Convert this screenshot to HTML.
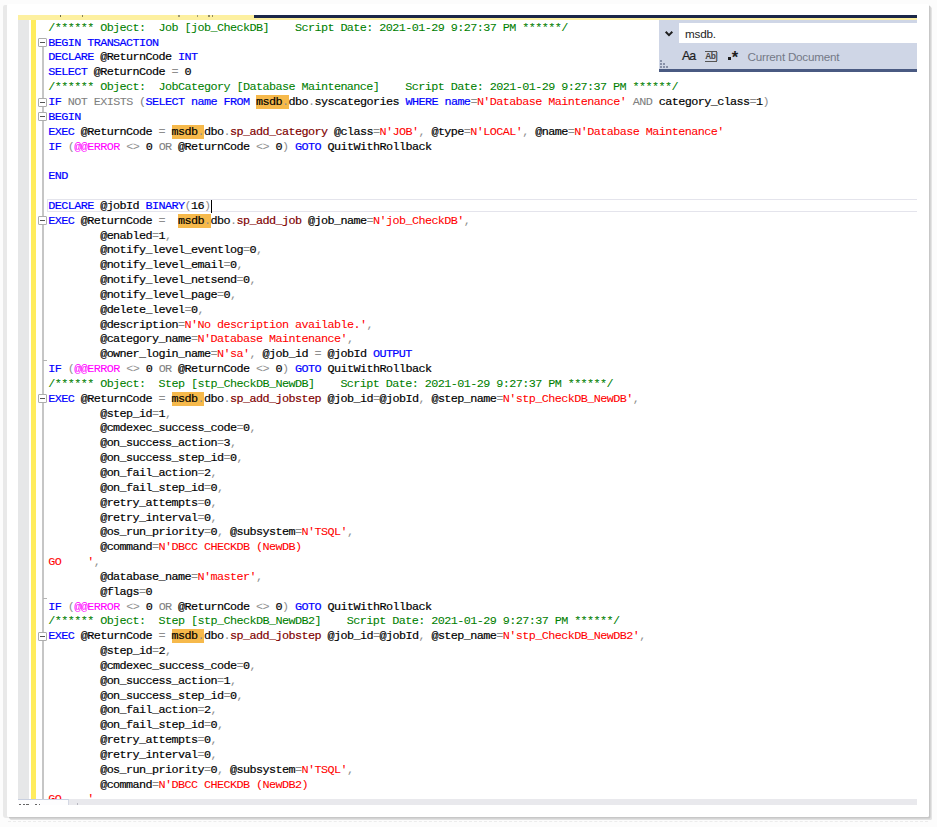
<!DOCTYPE html>
<html lang="en"><head><meta charset="utf-8"><title>SSMS job script</title>
<style>
html,body{margin:0;padding:0}
body{width:937px;height:827px;background:#fcfcfc;position:relative;overflow:hidden;font-family:"Liberation Sans",sans-serif}
#card{position:absolute;left:6.9px;top:3.5px;width:922.3px;height:813.5px;background:#fff;border-radius:1.5px;
 box-shadow:1.5px 1.4px 0 0 #c7c7c7, 2.9px 3.1px 0 0 #e1e1e1}
#lband{position:absolute;left:3px;top:5px;width:5px;height:813px;background:#e9e9e9;border-radius:2px 0 0 3px}
#dots{position:absolute;left:8px;top:821.2px;width:920px;height:0;border-top:0.9px dashed #ececec}
#ed{position:absolute;left:18px;top:15.2px;width:899px;height:789.8px;background:#fff;overflow:hidden}
.abs{position:absolute}
#code{position:absolute;left:0;top:0;font-family:"Liberation Mono",monospace;font-size:11.8px;letter-spacing:-0.5862px;color:#000;white-space:pre;-webkit-text-stroke:0.18px}
.ln{position:absolute;left:30.20px;height:14.84px;line-height:14.84px;white-space:pre}
.c{color:#008000}.k{color:#0000ff}.g{color:#808080}.s{color:#ff0000}.m{color:#800000}.f{color:#ff00ff}
.c,.s,.g,.f{-webkit-text-stroke:0.06px}
.p{color:#8e8e8e;-webkit-text-stroke:0}
.h{-webkit-text-stroke:0.18px;background:#f6b94b;padding:0}
.bx{position:absolute;left:19.9px;width:7.1px;height:7.1px;border:1px solid #adadad;border-radius:1px;background:#fff;box-sizing:content-box}
.bx i{position:absolute;left:1.5px;top:3.0px;width:4.2px;height:1.1px;background:#555}
.tk{position:absolute;left:24.6px;width:4px;height:1px;background:#b4b4b4}
</style></head>
<body>
<div id="lband"></div><div id="dots"></div>
<div id="card"></div>
<div id="ed">
<div class="abs" style="left:0;top:0;width:236px;height:4.4px;background:#fdf0a0"></div>
<div class="abs" style="left:236px;top:0;width:663px;height:2.8px;background:#1b2748"></div>
<div class="abs" style="left:236px;top:2.8px;width:663px;height:1.6px;background:#fdf0a0"></div>
<div class="abs" style="left:41.5px;top:0.2px;width:1.6px;height:1.2px;background:#4a4a30;opacity:.8"></div>
<div class="abs" style="left:63.7px;top:0.2px;width:1.6px;height:1.2px;background:#6a6a48;opacity:.8"></div>
<div class="abs" style="left:160.1px;top:0.2px;width:1.6px;height:1.2px;background:#8a8560;opacity:.8"></div>
<div class="abs" style="left:178.5px;top:0.2px;width:1.6px;height:1.2px;background:#8a8560;opacity:.8"></div>
<div class="abs" style="left:190.0px;top:0.2px;width:1.6px;height:1.2px;background:#77734f;opacity:.8"></div>
<div class="abs" style="left:193.9px;top:0.2px;width:1.6px;height:1.2px;background:#77734f;opacity:.8"></div>
<div class="abs" style="left:0;top:4.4px;width:10.8px;height:780px;background:#e6e7e8"></div>
<div class="abs" style="left:12.8px;top:4.4px;width:5px;height:780px;background:#ffec5c"></div>
<div class="abs" style="left:24.0px;top:30px;width:1.8px;height:755px;background:#c6c6c6"></div>
<div class="abs" style="left:28.5px;top:183.58px;width:871px;height:13.44px;border:1px solid #e4e4ec;box-sizing:border-box"></div>
<div id="code">
<div class="ln" style="top:5.60px"><span class="c">/****** Object:  Job [job_CheckDB]    Script Date: 2021-01-29 9:27:37 PM ******/</span></div>
<div class="ln" style="top:20.44px"><span class="k">BEGIN TRANSACTION</span></div>
<div class="ln" style="top:35.28px"><span class="k">DECLARE</span> @ReturnCode <span class="k">INT</span></div>
<div class="ln" style="top:50.12px"><span class="k">SELECT</span> @ReturnCode <span class="p">=</span> 0</div>
<div class="ln" style="top:64.96px"><span class="c">/****** Object:  JobCategory [Database Maintenance]    Script Date: 2021-01-29 9:27:37 PM ******/</span></div>
<div class="ln" style="top:79.80px"><span class="k">IF</span> <span class="g">NOT EXISTS (</span><span class="k">SELECT</span> <span class="k">name</span> <span class="k">FROM</span> <span class="h">msdb<span class="p">.</span></span>dbo<span class="p">.</span>syscategories <span class="k">WHERE</span> <span class="k">name</span><span class="p">=</span><span class="s">N'Database Maintenance'</span> <span class="g">AND</span> category_class<span class="p">=</span>1<span class="p">)</span></div>
<div class="ln" style="top:94.64px"><span class="k">BEGIN</span></div>
<div class="ln" style="top:109.48px"><span class="k">EXEC</span> @ReturnCode <span class="p">=</span> <span class="h">msdb<span class="p">.</span></span>dbo<span class="p">.</span><span class="m">sp_add_category</span> @class<span class="p">=</span><span class="s">N'JOB'</span><span class="p">,</span> @type<span class="p">=</span><span class="s">N'LOCAL'</span><span class="p">,</span> @name<span class="p">=</span><span class="s">N'Database Maintenance'</span></div>
<div class="ln" style="top:124.32px"><span class="k">IF</span> <span class="p">(</span><span class="f">@@ERROR</span> <span class="p">&lt;&gt;</span> 0 <span class="g">OR</span> @ReturnCode <span class="p">&lt;&gt;</span> 0<span class="p">)</span> <span class="k">GOTO</span> QuitWithRollback</div>
<div class="ln" style="top:139.16px"></div>
<div class="ln" style="top:154.00px"><span class="k">END</span></div>
<div class="ln" style="top:168.84px"></div>
<div class="ln" style="top:183.68px"><span class="k">DECLARE</span> @jobId <span class="k">BINARY</span><span class="p">(</span>16<span class="p">)</span></div>
<div class="ln" style="top:198.52px"><span class="k">EXEC</span> @ReturnCode <span class="p">=</span>  <span class="h">msdb<span class="p">.</span></span>dbo<span class="p">.</span><span class="m">sp_add_job</span> @job_name<span class="p">=</span><span class="s">N'job_CheckDB'</span><span class="p">,</span></div>
<div class="ln" style="top:213.36px">        @enabled<span class="p">=</span>1<span class="p">,</span></div>
<div class="ln" style="top:228.20px">        @notify_level_eventlog<span class="p">=</span>0<span class="p">,</span></div>
<div class="ln" style="top:243.04px">        @notify_level_email<span class="p">=</span>0<span class="p">,</span></div>
<div class="ln" style="top:257.88px">        @notify_level_netsend<span class="p">=</span>0<span class="p">,</span></div>
<div class="ln" style="top:272.72px">        @notify_level_page<span class="p">=</span>0<span class="p">,</span></div>
<div class="ln" style="top:287.56px">        @delete_level<span class="p">=</span>0<span class="p">,</span></div>
<div class="ln" style="top:302.40px">        @description<span class="p">=</span><span class="s">N'No description available.'</span><span class="p">,</span></div>
<div class="ln" style="top:317.24px">        @category_name<span class="p">=</span><span class="s">N'Database Maintenance'</span><span class="p">,</span></div>
<div class="ln" style="top:332.08px">        @owner_login_name<span class="p">=</span><span class="s">N'sa'</span><span class="p">,</span> @job_id <span class="p">=</span> @jobId <span class="k">OUTPUT</span></div>
<div class="ln" style="top:346.92px"><span class="k">IF</span> <span class="p">(</span><span class="f">@@ERROR</span> <span class="p">&lt;&gt;</span> 0 <span class="g">OR</span> @ReturnCode <span class="p">&lt;&gt;</span> 0<span class="p">)</span> <span class="k">GOTO</span> QuitWithRollback</div>
<div class="ln" style="top:361.76px"><span class="c">/****** Object:  Step [stp_CheckDB_NewDB]    Script Date: 2021-01-29 9:27:37 PM ******/</span></div>
<div class="ln" style="top:376.60px"><span class="k">EXEC</span> @ReturnCode <span class="p">=</span> <span class="h">msdb<span class="p">.</span></span>dbo<span class="p">.</span><span class="m">sp_add_jobstep</span> @job_id<span class="p">=</span>@jobId<span class="p">,</span> @step_name<span class="p">=</span><span class="s">N'stp_CheckDB_NewDB'</span><span class="p">,</span></div>
<div class="ln" style="top:391.44px">        @step_id<span class="p">=</span>1<span class="p">,</span></div>
<div class="ln" style="top:406.28px">        @cmdexec_success_code<span class="p">=</span>0<span class="p">,</span></div>
<div class="ln" style="top:421.12px">        @on_success_action<span class="p">=</span>3<span class="p">,</span></div>
<div class="ln" style="top:435.96px">        @on_success_step_id<span class="p">=</span>0<span class="p">,</span></div>
<div class="ln" style="top:450.80px">        @on_fail_action<span class="p">=</span>2<span class="p">,</span></div>
<div class="ln" style="top:465.64px">        @on_fail_step_id<span class="p">=</span>0<span class="p">,</span></div>
<div class="ln" style="top:480.48px">        @retry_attempts<span class="p">=</span>0<span class="p">,</span></div>
<div class="ln" style="top:495.32px">        @retry_interval<span class="p">=</span>0<span class="p">,</span></div>
<div class="ln" style="top:510.16px">        @os_run_priority<span class="p">=</span>0<span class="p">,</span> @subsystem<span class="p">=</span><span class="s">N'TSQL'</span><span class="p">,</span></div>
<div class="ln" style="top:525.00px">        @command<span class="p">=</span><span class="s">N'DBCC CHECKDB (NewDB)</span></div>
<div class="ln" style="top:539.84px"><span class="s">GO    '</span><span class="p">,</span></div>
<div class="ln" style="top:554.68px">        @database_name<span class="p">=</span><span class="s">N'master'</span><span class="p">,</span></div>
<div class="ln" style="top:569.52px">        @flags<span class="p">=</span>0</div>
<div class="ln" style="top:584.36px"><span class="k">IF</span> <span class="p">(</span><span class="f">@@ERROR</span> <span class="p">&lt;&gt;</span> 0 <span class="g">OR</span> @ReturnCode <span class="p">&lt;&gt;</span> 0<span class="p">)</span> <span class="k">GOTO</span> QuitWithRollback</div>
<div class="ln" style="top:599.20px"><span class="c">/****** Object:  Step [stp_CheckDB_NewDB2]    Script Date: 2021-01-29 9:27:37 PM ******/</span></div>
<div class="ln" style="top:614.04px"><span class="k">EXEC</span> @ReturnCode <span class="p">=</span> <span class="h">msdb<span class="p">.</span></span>dbo<span class="p">.</span><span class="m">sp_add_jobstep</span> @job_id<span class="p">=</span>@jobId<span class="p">,</span> @step_name<span class="p">=</span><span class="s">N'stp_CheckDB_NewDB2'</span><span class="p">,</span></div>
<div class="ln" style="top:628.88px">        @step_id<span class="p">=</span>2<span class="p">,</span></div>
<div class="ln" style="top:643.72px">        @cmdexec_success_code<span class="p">=</span>0<span class="p">,</span></div>
<div class="ln" style="top:658.56px">        @on_success_action<span class="p">=</span>1<span class="p">,</span></div>
<div class="ln" style="top:673.40px">        @on_success_step_id<span class="p">=</span>0<span class="p">,</span></div>
<div class="ln" style="top:688.24px">        @on_fail_action<span class="p">=</span>2<span class="p">,</span></div>
<div class="ln" style="top:703.08px">        @on_fail_step_id<span class="p">=</span>0<span class="p">,</span></div>
<div class="ln" style="top:717.92px">        @retry_attempts<span class="p">=</span>0<span class="p">,</span></div>
<div class="ln" style="top:732.76px">        @retry_interval<span class="p">=</span>0<span class="p">,</span></div>
<div class="ln" style="top:747.60px">        @os_run_priority<span class="p">=</span>0<span class="p">,</span> @subsystem<span class="p">=</span><span class="s">N'TSQL'</span><span class="p">,</span></div>
<div class="ln" style="top:762.44px">        @command<span class="p">=</span><span class="s">N'DBCC CHECKDB (NewDB2)</span></div>
<div class="ln" style="top:777.28px"><span class="s">GO    '</span><span class="p">,</span></div>
</div>
<div class="abs" style="left:193.2px;top:184.38px;width:1px;height:13px;background:#000"></div>
<div class="bx" style="top:22.99px"><i></i></div>
<div class="bx" style="top:82.35px"><i></i></div>
<div class="bx" style="top:97.19px"><i></i></div>
<div class="bx" style="top:201.07px"><i></i></div>
<div class="bx" style="top:379.15px"><i></i></div>
<div class="bx" style="top:616.59px"><i></i></div>
<div class="tk" style="top:344.92px"></div>
<div class="tk" style="top:582.36px"></div>
<div class="abs" style="left:0;top:783.9px;width:899px;height:6px;background:#e9e9ed"></div>
<div class="abs" style="left:0;top:783.9px;width:51px;height:6px;background:#fdfdfe;border-top:1px solid #c9d0e0;border-right:1px solid #d4d8e4;box-sizing:border-box"></div>
<div class="abs" style="left:0.5px;top:788.6px;width:2.2px;height:1.2px;background:#333;opacity:.75"></div>
<div class="abs" style="left:4.5px;top:788.6px;width:2.6px;height:1.2px;background:#333;opacity:.75"></div>
<div class="abs" style="left:8.3px;top:788.6px;width:2.6px;height:1.2px;background:#333;opacity:.75"></div>
<div class="abs" style="left:16.8px;top:788.6px;width:2.4px;height:1.2px;background:#333;opacity:.75"></div>
<div class="abs" style="left:21.2px;top:788.6px;width:1.2px;height:1.2px;background:#333;opacity:.75"></div>
<div class="abs" style="left:59px;top:788.2px;width:1.4px;height:1.4px;background:#b8b8c0"></div>
<div id="find" class="abs" style="left:641px;top:4.4px;width:258px;height:49.4px;background:#cfd6e6;border-bottom:3.3px solid #4a5a82;box-sizing:content-box">
<div class="abs" style="left:19.6px;top:3.4px;width:240px;height:20px;background:#fff"></div>
<svg class="abs" style="left:5.1px;top:10px" width="10" height="8" viewBox="0 0 10 8"><path d="M1.7 1.8 L5 5.1 L8.3 1.8" fill="none" stroke="#1e1e1e" stroke-width="2"/></svg>
<div class="abs" style="left:26px;top:6.2px;font-size:11.7px;letter-spacing:-0.22px;line-height:16px;color:#1e1e1e">msdb.</div>
<div class="abs" style="left:22.9px;top:28.3px;font-size:12.4px;line-height:16px;color:#1e1e1e;letter-spacing:-1.0px;-webkit-text-stroke:0.2px">Aa</div>
<div class="abs" style="left:46.3px;top:31.6px;width:11.8px;height:10.7px;border-top:1px solid #555;border-bottom:1px solid #555;box-sizing:border-box;font-size:8.4px;line-height:8.6px;color:#444;text-align:center;letter-spacing:-0.5px;font-weight:bold">Ab|</div>
<div class="abs" style="left:68.9px;top:37.8px;width:3.2px;height:3px;background:#1e1e1e"></div>
<div class="abs" style="left:72.8px;top:29.0px;font-size:16.5px;line-height:16px;color:#1e1e1e;font-weight:bold">*</div>
<div class="abs" style="left:88.6px;top:29.2px;font-size:11.7px;letter-spacing:-0.24px;line-height:16px;color:#747987">Current Document</div>
<div class="abs" style="left:1.4px;top:40.8px;width:1.4px;height:1.4px;background:#8790a8;box-shadow:0 3px #8790a8,0 6px #8790a8,3px 3px #8790a8,3px 6px #8790a8,6px 6px #8790a8"></div>
</div>
</div>
</body></html>
